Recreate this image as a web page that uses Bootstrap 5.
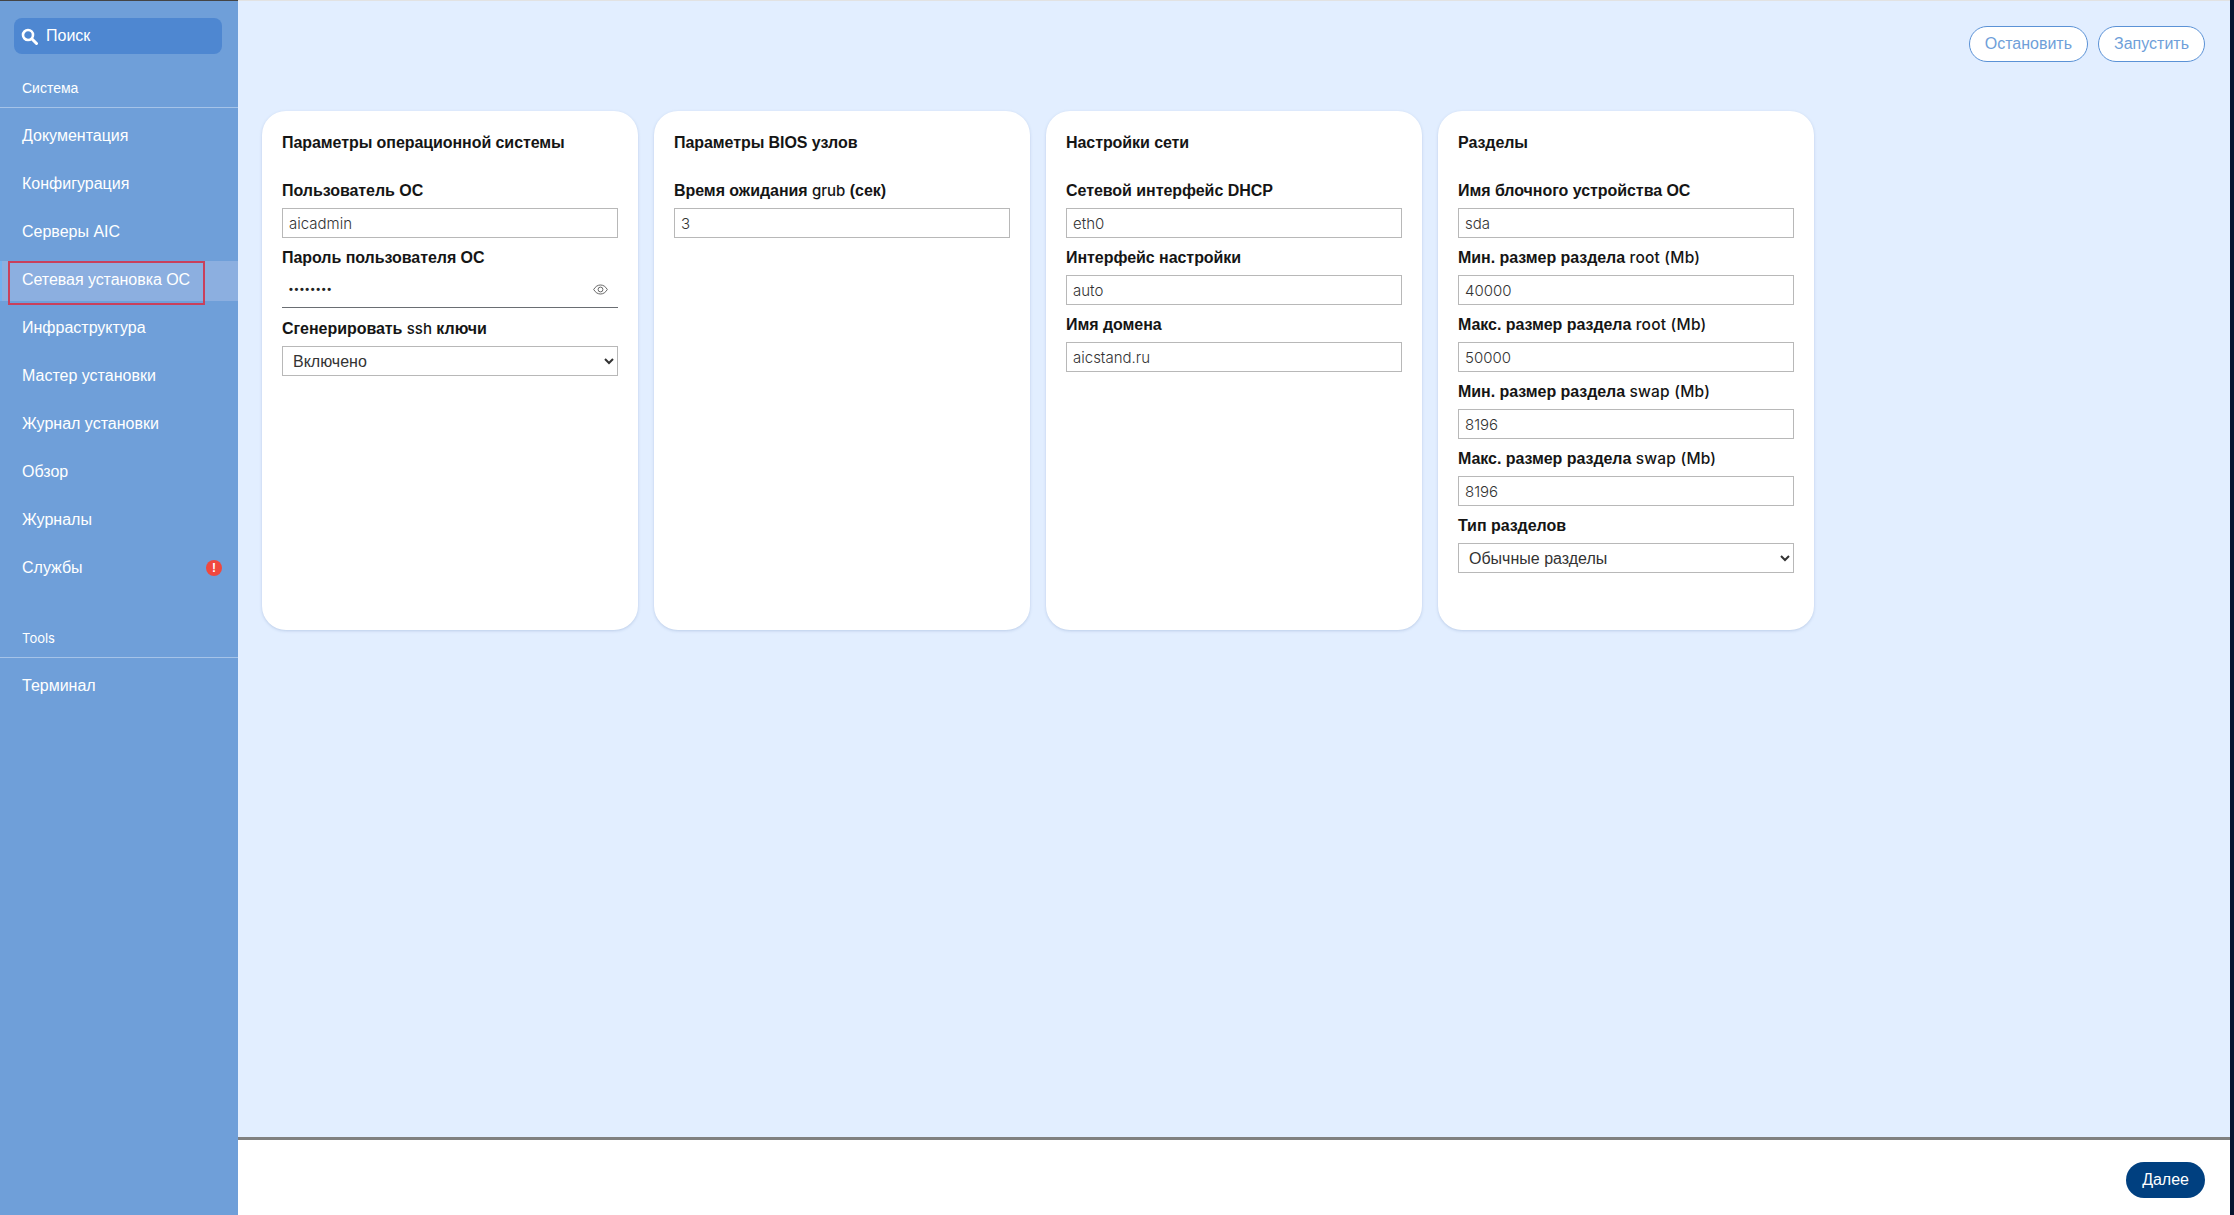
<!DOCTYPE html>
<html lang="ru">
<head>
<meta charset="utf-8">
<title>Сетевая установка ОС</title>
<link rel="stylesheet" href="https://cdn.jsdelivr.net/npm/bootstrap@5.3.0/dist/css/bootstrap.min.css">
<style>
html,body{height:100%;overflow:hidden}
body{font-family:"Liberation Sans",Arial,sans-serif;font-size:16px;color:#151515;background:#fff}
.shell{height:1215px;border-right:4px solid #061530}
.side{width:238px;flex:none;background:#6f9fd9;color:#fff;border-top:1px solid #444}
.searchbox{margin:17px 16px 0 14px;height:36px;border-radius:8px;background:#4e87d1;color:#fff;padding-left:7px;gap:8px}
.sect-rule{border-bottom:1px solid #a5c3e8;padding:0 22px;font-size:14px;line-height:20px}
.sect-sys{height:54px;padding-top:24px;margin-bottom:4px}
.sect-tools{height:66px;padding-top:36px;font-family:Inter,sans-serif;font-size:13px;margin-bottom:4px}
.navi{display:flex;align-items:center;justify-content:space-between;height:48px;padding:0 16px 0 22px;color:#fff;text-decoration:none;position:relative}
.navi.cur::before{content:"";position:absolute;left:0;top:5px;height:40px;width:238px;background:#8cafe0;border-left:2px solid #73b1f0}
.navi span{position:relative}
.navi.cur span{letter-spacing:-.05px}
.redbox{position:absolute;left:8px;top:5px;width:197px;height:44px;border:2px solid #c9405c}
.alertdot{width:16px;height:16px;border-radius:50%;background:#f0483e;color:#fff;font-size:12px;font-weight:700;line-height:16px;text-align:center}
.mainpane{background:#e2eeff;border-top:1px solid #e2e2e2;min-width:0}
.topbar{padding:25px 25px 0 0;height:110px;gap:10px}
.pillbtn{height:36px;border-radius:18px;padding:0 15px;font-size:16px;line-height:34px;background:#fff;border:1px solid #5b92d6;color:#6f9fd9}
.pillbtn:hover{background:#fff;color:#6f9fd9}
.nextbtn{height:36px;border-radius:18px;padding:0 16px;font-size:16px;line-height:36px;background:#004080;border:0;color:#fff}
.cardrow{padding-left:24px;gap:16px}
.pane{width:376px;height:519px;background:#fff;border-radius:24px;padding:20px;box-shadow:0 1px 3px rgba(100,130,180,.3)}
.panetitle{font-size:16px;font-weight:700;line-height:24px;margin:0 0 24px;letter-spacing:-.07px}
.lbl{display:block;font-weight:700;line-height:24px;margin:0 0 5px;height:24px;letter-spacing:-.05px}
.lbl i{font-style:normal;font-family:Inter,sans-serif;font-weight:500;font-size:15px;letter-spacing:0}
.lbl i.wide{font-size:15.5px;letter-spacing:.2px}
.fld{display:block;width:336px;height:30px;padding:0 6px;border:1px solid #b8b8b8;border-radius:0;font-family:Inter,sans-serif;font-weight:300;font-size:15px;color:#333;margin-bottom:8px;background:#fff}
.fld:focus{outline:0}
.sel{display:block;width:336px;height:30px;padding:0 0 0 6px;border:1px solid #b8b8b8;border-radius:0;background:#fff;font-size:16px;color:#333;font-family:"Liberation Sans",sans-serif}
.pwd{width:336px;height:33px;margin-bottom:9px;border-bottom:1px solid #6a6e73;padding:0 10px 3px 7px}
.pwd b{font-size:11px;letter-spacing:1.6px;line-height:1;color:#222}
.foot{height:78px;border-top:3px solid #808080;background:#fff;padding:22px 25px 0 0}
.grow{flex:1 1 auto}
</style>
</head>
<body>
<div class="shell d-flex">
  <nav class="side d-flex flex-column">
    <div class="searchbox d-flex align-items-center">
      <svg width="17" height="17" viewBox="0 0 17 17" fill="none" stroke="#fff"><circle cx="7" cy="7" r="5" stroke-width="2.6"/><path d="M10.800 10.800 15.500 15.500" stroke-width="3" stroke-linecap="round"/></svg>
      <span>Поиск</span>
    </div>
    <div class="sect-rule sect-sys">Система</div>
    <a class="navi" href="#"><span>Документация</span></a>
    <a class="navi" href="#"><span>Конфигурация</span></a>
    <a class="navi" href="#"><span>Серверы AIC</span></a>
    <a class="navi cur" href="#"><span>Сетевая установка ОС</span><em class="redbox"></em></a>
    <a class="navi" href="#"><span>Инфраструктура</span></a>
    <a class="navi" href="#"><span>Мастер установки</span></a>
    <a class="navi" href="#"><span>Журнал установки</span></a>
    <a class="navi" href="#"><span>Обзор</span></a>
    <a class="navi" href="#"><span>Журналы</span></a>
    <a class="navi" href="#"><span>Службы</span><span class="alertdot">!</span></a>
    <div class="sect-rule sect-tools">Tools</div>
    <a class="navi" href="#"><span>Терминал</span></a>
  </nav>
  <div class="mainpane grow d-flex flex-column">
    <div class="topbar d-flex justify-content-end align-items-start">
      <button class="btn pillbtn" type="button">Остановить</button>
      <button class="btn pillbtn" type="button">Запустить</button>
    </div>
    <div class="cardrow d-flex grow">
      <section class="pane">
        <h2 class="panetitle">Параметры операционной системы</h2>
        <label class="lbl">Пользователь ОС</label>
        <input class="fld" value="aicadmin">
        <label class="lbl">Пароль пользователя ОС</label>
        <div class="pwd d-flex align-items-center justify-content-between">
          <b>••••••••</b>
          <svg width="15" height="11" viewBox="0 0 15 11" fill="none" stroke="#555" stroke-width=".9"><path d="M.7 5.5C2.5 2.4 4.8 1 7.5 1s5 1.4 6.8 4.5C12.500 8.600 10.200 10 7.500 10S2.500 8.600.7 5.500Z"/><circle cx="7.500" cy="5.500" r="2.400"/></svg>
        </div>
        <label class="lbl">Сгенерировать <i>ssh</i> ключи</label>
        <select class="sel"><option>Включено</option></select>
      </section>
      <section class="pane">
        <h2 class="panetitle">Параметры BIOS узлов</h2>
        <label class="lbl">Время ожидания <i>grub</i> (сек)</label>
        <input class="fld" value="3">
      </section>
      <section class="pane">
        <h2 class="panetitle">Настройки сети</h2>
        <label class="lbl">Сетевой интерфейс DHCP</label>
        <input class="fld" value="eth0">
        <label class="lbl">Интерфейс настройки</label>
        <input class="fld" value="auto">
        <label class="lbl">Имя домена</label>
        <input class="fld" value="aicstand.ru">
      </section>
      <section class="pane">
        <h2 class="panetitle">Разделы</h2>
        <label class="lbl">Имя блочного устройства ОС</label>
        <input class="fld" value="sda">
        <label class="lbl">Мин. размер раздела <i class="wide">root (Mb)</i></label>
        <input class="fld" value="40000">
        <label class="lbl">Макс. размер раздела <i class="wide">root (Mb)</i></label>
        <input class="fld" value="50000">
        <label class="lbl">Мин. размер раздела <i class="wide">swap (Mb)</i></label>
        <input class="fld" value="8196">
        <label class="lbl">Макс. размер раздела <i class="wide">swap (Mb)</i></label>
        <input class="fld" value="8196">
        <label class="lbl">Тип разделов</label>
        <select class="sel"><option>Обычные разделы</option></select>
      </section>
    </div>
    <div class="foot d-flex justify-content-end align-items-start">
      <button class="btn nextbtn" type="button">Далее</button>
    </div>
  </div>
</div>
</body>
</html>
